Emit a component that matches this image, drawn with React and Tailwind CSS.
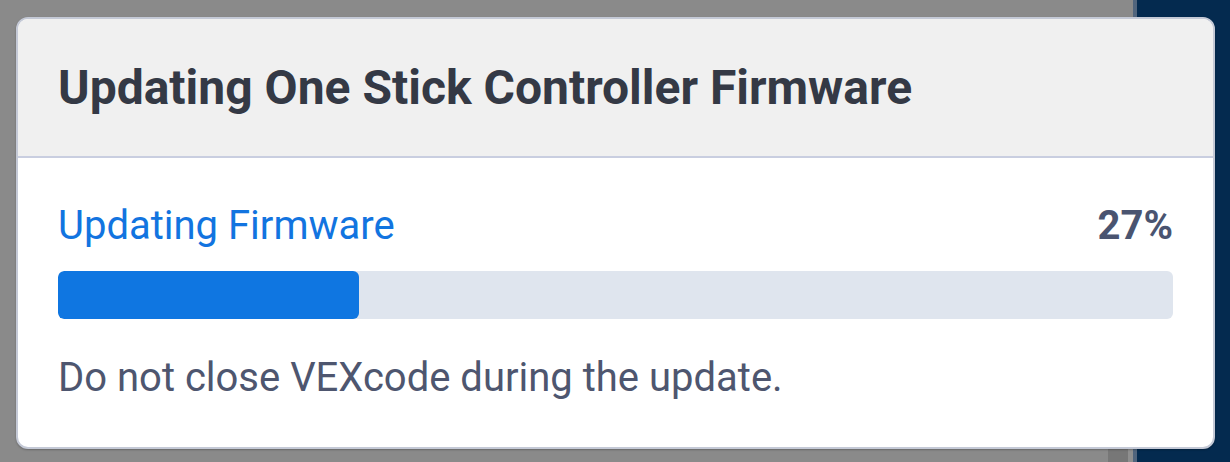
export default function App() {
  return (
    <div className="relative flex h-[462px] w-[1230px] overflow-hidden bg-[#8a8a8a]" style={{ fontFamily: 'Roboto, "Liberation Sans", sans-serif' }}>
      <div className="flex flex-1 flex-col">
        <div className="flex-1" />
        <div className="flex h-[13px] justify-end">
          <div className="w-[20px] bg-[#777777]" />
          <div className="w-[5px] bg-[#8f8f8f]" />
        </div>
      </div>
      <div className="w-[4px] bg-[#51657d]" />
      <div className="w-[93px] bg-[#042a4f]" />

      <div className="absolute left-[16px] top-[17px] flex h-[432px] w-[1199px] flex-col overflow-hidden rounded-[12px] border-2 border-[#c4c9d6] bg-white shadow-[0_1px_2px_rgba(0,0,0,0.25)]">
        <div className="flex h-[139px] shrink-0 items-center border-b-2 border-[#c9cee0] bg-[#f0f0f0] px-[40px]">
          <h1 className="text-[48px] font-bold leading-[56px] text-[#343945]">
            Updating One Stick Controller Firmware
          </h1>
        </div>
        <div className="flex flex-col px-[40px] pt-[44px]">
          <div className="flex items-center justify-between text-[40px] leading-[48px]">
            <span className="text-[#1274e0]">Updating Firmware</span>
            <span className="font-bold text-[#4a5470]">27%</span>
          </div>
          <div className="mt-[21px] h-[48px] w-full overflow-hidden rounded-[6px] bg-[#dfe5ee]">
            <div className="h-full rounded-[6px] bg-[#0f76e1]" style={{ width: '27%' }} />
          </div>
          <p className="mt-[35px] text-[40px] leading-[48px] text-[#4e566f]">
            Do not close VEXcode during the update.
          </p>
        </div>
      </div>
    </div>
  );
}
